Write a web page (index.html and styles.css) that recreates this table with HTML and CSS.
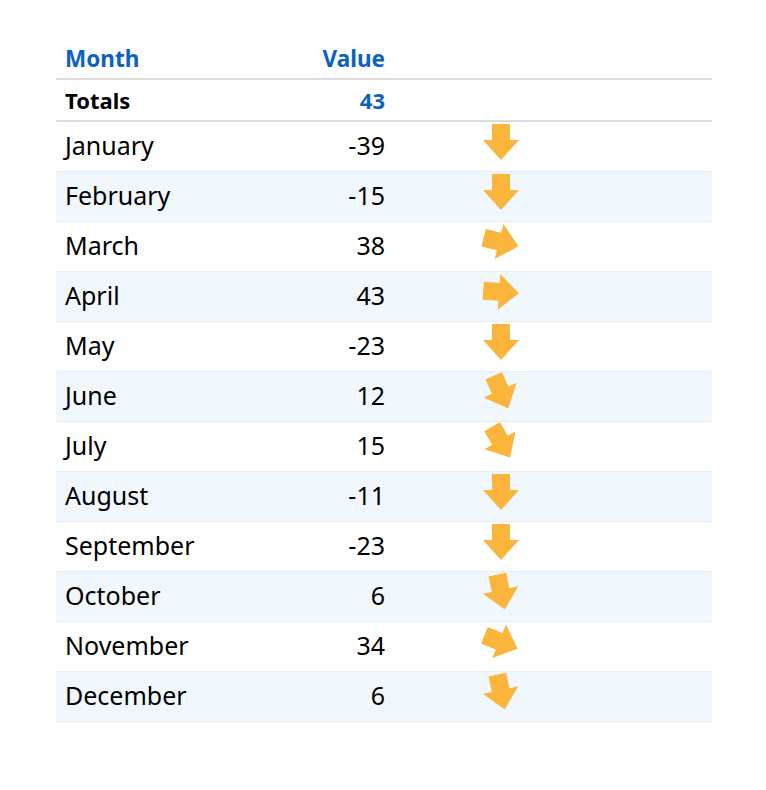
FILE: index.html
```html
<!DOCTYPE html>
<html>
<head>
<meta charset="utf-8">
<link rel="stylesheet" href="styles.css">
</head>
<body>
<table class="grid">
  <thead>
    <tr class="head">
      <th class="c-month">Month</th>
      <th class="c-value">Value</th>
      <th class="c-icon"></th>
    </tr>
    <tr class="totals">
      <td class="c-month">Totals</td>
      <td class="c-value">43</td>
      <td class="c-icon"></td>
    </tr>
  </thead>
  <tbody>
    <tr><td class="c-month">January</td><td class="c-value">-39</td><td class="c-icon"><svg class="arrow" viewBox="0 0 36 36" style="transform: rotate(0deg)"><polygon points="9,0 27,0 27,16 36,16 18,36 0,16 9,16"/></svg></td></tr>
    <tr><td class="c-month">February</td><td class="c-value">-15</td><td class="c-icon"><svg class="arrow" viewBox="0 0 36 36" style="transform: rotate(0deg)"><polygon points="9,0 27,0 27,16 36,16 18,36 0,16 9,16"/></svg></td></tr>
    <tr><td class="c-month">March</td><td class="c-value">38</td><td class="c-icon"><svg class="arrow" viewBox="0 0 36 36" style="transform: rotate(-76deg)"><polygon points="9,0 27,0 27,16 36,16 18,36 0,16 9,16"/></svg></td></tr>
    <tr><td class="c-month">April</td><td class="c-value">43</td><td class="c-icon"><svg class="arrow" viewBox="0 0 36 36" style="transform: rotate(-86deg)"><polygon points="9,0 27,0 27,16 36,16 18,36 0,16 9,16"/></svg></td></tr>
    <tr><td class="c-month">May</td><td class="c-value">-23</td><td class="c-icon"><svg class="arrow" viewBox="0 0 36 36" style="transform: rotate(0deg)"><polygon points="9,0 27,0 27,16 36,16 18,36 0,16 9,16"/></svg></td></tr>
    <tr><td class="c-month">June</td><td class="c-value">12</td><td class="c-icon"><svg class="arrow" viewBox="0 0 36 36" style="transform: rotate(-24deg)"><polygon points="9,0 27,0 27,16 36,16 18,36 0,16 9,16"/></svg></td></tr>
    <tr><td class="c-month">July</td><td class="c-value">15</td><td class="c-icon"><svg class="arrow" viewBox="0 0 36 36" style="transform: rotate(-30deg)"><polygon points="9,0 27,0 27,16 36,16 18,36 0,16 9,16"/></svg></td></tr>
    <tr><td class="c-month">August</td><td class="c-value">-11</td><td class="c-icon"><svg class="arrow" viewBox="0 0 36 36" style="transform: rotate(0deg)"><polygon points="9,0 27,0 27,16 36,16 18,36 0,16 9,16"/></svg></td></tr>
    <tr><td class="c-month">September</td><td class="c-value">-23</td><td class="c-icon"><svg class="arrow" viewBox="0 0 36 36" style="transform: rotate(0deg)"><polygon points="9,0 27,0 27,16 36,16 18,36 0,16 9,16"/></svg></td></tr>
    <tr><td class="c-month">October</td><td class="c-value">6</td><td class="c-icon"><svg class="arrow" viewBox="0 0 36 36" style="transform: rotate(-12deg)"><polygon points="9,0 27,0 27,16 36,16 18,36 0,16 9,16"/></svg></td></tr>
    <tr><td class="c-month">November</td><td class="c-value">34</td><td class="c-icon"><svg class="arrow" viewBox="0 0 36 36" style="transform: rotate(-68deg)"><polygon points="9,0 27,0 27,16 36,16 18,36 0,16 9,16"/></svg></td></tr>
    <tr><td class="c-month">December</td><td class="c-value">6</td><td class="c-icon"><svg class="arrow" viewBox="0 0 36 36" style="transform: rotate(-12deg)"><polygon points="9,0 27,0 27,16 36,16 18,36 0,16 9,16"/></svg></td></tr>
  </tbody>
</table>
</body>
</html>
```
FILE: styles.css
```css
html, body {
  margin: 0;
  padding: 0;
  background: #ffffff;
}
body {
  padding: 40px 0 0 56px;
  font-family: "Noto Sans", "Open Sans", sans-serif;
  color: #000;
}
.grid {
  border-collapse: collapse;
  width: 656px;
  table-layout: fixed;
}
.grid th, .grid td {
  padding: 0;
  vertical-align: middle;
}
.c-month {
  width: 200px;
  padding-left: 9px !important;
  text-align: left;
}
.c-value {
  width: 120px;
  text-align: right;
  padding-right: 10px !important;
}
.c-icon {
  padding-left: 88px !important;
  text-align: left;
}
.head th {
  height: 38px;
  font-size: 22.5px;
  font-weight: 700;
  color: #0a62c2;
  border-bottom: 2px solid #dcdcdc;
  line-height: 1;
}
.totals td {
  height: 40px;
  font-size: 22px;
  font-weight: 700;
  border-bottom: 2px solid #dcdcdc;
}
.totals .c-value {
  color: #0a62c2;
}
tbody td {
  height: 46px;
  padding-bottom: 3px !important;
  font-size: 25px;
  border-bottom: 1px solid #e4eff8;
}
tbody tr:nth-child(even) td {
  background: #f0f8fe;
}
.arrow {
  display: block;
  width: 36px;
  height: 36px;
  fill: #fbb53c;
  margin-top: -6px;
}
```
